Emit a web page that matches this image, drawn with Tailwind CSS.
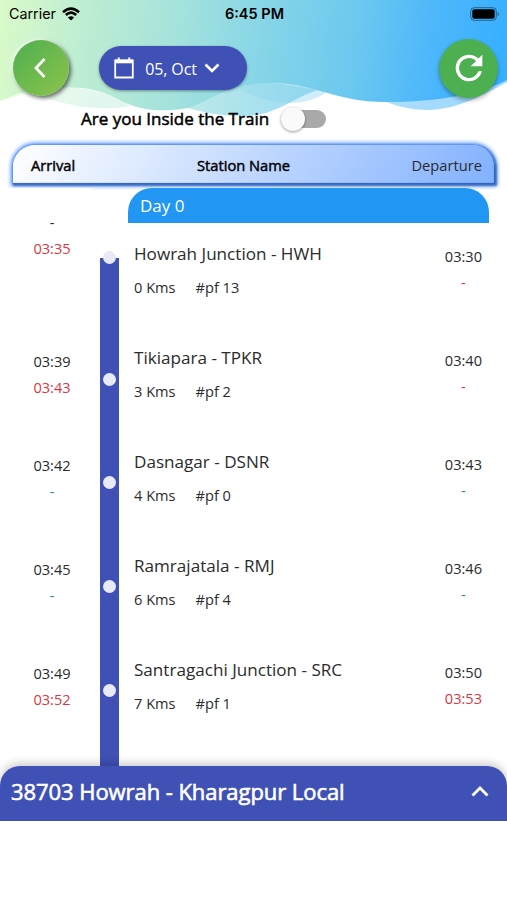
<!DOCTYPE html>
<html lang="en">
<head>
<meta charset="utf-8">
<meta name="viewport" content="width=device-width, initial-scale=1">
<title>Train status</title>
<script src="https://cdn.jsdelivr.net/npm/@tailwindcss/browser@4"></script>
</head>
<body class="bg-white">
<main class="relative flex h-[900px] w-[507px] flex-col overflow-hidden bg-white font-['Open_Sans',sans-serif] text-[#2b2b2b]">
  <svg class="absolute left-0 top-0" width="507" height="135" viewBox="0 0 507 135">
    <defs>
      <linearGradient id="sky" gradientUnits="userSpaceOnUse" x1="-10" y1="30" x2="505" y2="95">
        <stop offset="0" stop-color="#dcfbc8"/><stop offset=".18" stop-color="#bdedd2"/><stop offset=".35" stop-color="#a6e3dc"/><stop offset=".5" stop-color="#8ad7e6"/><stop offset=".7" stop-color="#6cc8ef"/><stop offset=".85" stop-color="#4db7fb"/><stop offset="1" stop-color="#36afff"/>
      </linearGradient>
    </defs>
    <path fill="url(#sky)" fill-opacity=".4" d="M0 101C30 86 75 80 118 98L130 106C85 114 55 99 25 94Z"/>
    <path fill="url(#sky)" fill-opacity=".7" d="M188 108C215 88 245 78 290 85L318 90C290 99 275 116 245 116C222 116 205 113 188 108Z"/>
    <path fill="url(#sky)" fill-opacity=".35" d="M235 85C250 97 270 103 290 103C305 103 318 98 326 93L290 80Z"/>
    <path fill="url(#sky)" fill-opacity=".5" d="M383 101C400 107 412 110 428 110C460 109 485 94 507 82V70Z"/>
    <path fill="url(#sky)" d="M0 0H507V80C480 94 440 102 385 102C335 102 315 83 270 83C230 83 215 98 188 108C165 112 140 112 118 99C90 84 65 87 35 90C20 92 10 97 0 101Z"/>
  </svg>

  <header class="relative flex h-[141px] shrink-0 flex-col">
    <div class="flex h-7 items-center justify-between pl-[9px] pr-[7px] font-['Inter',sans-serif] text-black">
      <div class="flex w-[150px] items-center gap-[6px] text-[14.3px]">Carrier
        <svg width="18" height="14" viewBox="0 0 18 14" fill="none" stroke="#000" stroke-width="2.5"><path d="M1 5.2Q9-2 17 5.2M3.8 8Q9 3.3 14.2 8"/><path d="M9 13.6L5.9 10.5Q9 7.8 12.1 10.5Z" fill="#000" stroke="none"/></svg>
      </div>
      <span class="text-[14.5px] font-semibold">6:45 PM</span>
      <div class="flex w-[150px] justify-end"><svg width="30" height="14" viewBox="0 0 30 14"><rect x=".7" y=".7" width="25.6" height="12.6" rx="3.5" fill="none" stroke="#000" stroke-opacity=".45"/><rect x="2.3" y="2.3" width="22.4" height="9.4" rx="2" fill="#000"/><path d="M27.6 4.7Q30 7 27.6 9.3Z" fill="#000" fill-opacity=".5"/></svg></div>
    </div>
    <div class="flex h-20 items-center pl-[13px] pr-[9px]">
      <button class="grid size-14 place-items-center rounded-full bg-linear-to-br from-[#4caf50] to-[#8bc34a] shadow-[2px_2px_4px_#0009,-1px_-1px_3px_#fff]">
        <svg class="-ml-[3px]" width="14" height="22" viewBox="0 0 14 22" fill="none" stroke="#fff" stroke-width="2.7"><path d="M11.5 2L3 11L11.5 20"/></svg>
      </button>
      <button class="ml-[30px] flex h-11 w-[148px] items-center rounded-full bg-[#3f51b5] pl-[15px] text-white shadow-[0_1px_3px_#0006]">
        <svg width="20" height="22" viewBox="0 0 20 22" fill="none" stroke="#fff" stroke-width="1.8"><path d="M1.2 3.5H18.8V20.5H1.2Z"/><path d="M1 4.5H19" stroke-width="3.6"/><path d="M4.7 .5V4M15.3 .5V4" stroke-width="2"/></svg>
        <span class="ml-[11px] mt-px w-[52px] text-[16px] tracking-[-0.1px] whitespace-nowrap">05, Oct</span>
        <svg class="ml-[7px]" width="16" height="10" viewBox="0 0 16 10" fill="none" stroke="#fff" stroke-width="2.6"><path d="M1.5 1.5L8 8L14.5 1.5"/></svg>
      </button>
      <button class="ml-auto grid size-[59px] place-items-center rounded-full bg-[#4caf50] shadow-[0_2px_4px_#0005]">
        <svg class="-mr-px" width="40" height="40" viewBox="0 0 24 24" fill="#fff"><path d="M17.65 6.35A7.96 7.96 0 0 0 12 4a8 8 0 1 0 7.73 10h-2.08A6 6 0 1 1 12 6c1.66 0 3.14.69 4.22 1.78L13 11h7V4z"/></svg>
      </button>
    </div>
    <div class="flex h-[22px] items-center pl-[81px] text-black">
      <span class="w-[190px] whitespace-nowrap text-[17px] [-webkit-text-stroke:0.5px_#000]">Are you Inside the Train</span>
      <div class="ml-[10px] flex h-[18px] w-[45px] items-center rounded-full bg-[#a9a9a9]"><div class="size-6 shrink-0 rounded-full bg-[#fafafa] shadow-[0_1px_3px_#0006]"></div></div>
    </div>
  </header>

  <div class="mx-[13px] mt-1 flex h-[39px] w-[482px] shrink-0 items-center rounded-t-[22px] bg-linear-[120deg] from-white to-[#82b1ff] pl-[18px] pr-[13px] pt-px text-[14.7px] shadow-[inset_-1px_-1px_1px_#2a5ab8,1px_1px_2px_1px_#1a4a9a99,0_0_4px_2px_#448aff]">
    <span class="w-[166px] text-black [-webkit-text-stroke:0.45px_#000]">Arrival</span>
    <span class="text-black [-webkit-text-stroke:0.45px_#000]">Station Name</span>
    <span class="ml-auto">Departure</span>
  </div>

  <section class="relative mt-1 flex h-[578px] shrink-0 flex-col overflow-hidden text-[14.6px] leading-5">
    <div class="flex h-[139px] shrink-0">
      <div class="flex w-[91px] flex-col items-center gap-[6px] bg-white pl-[13px] pt-[24px]"><span>-</span><span class="text-[#d8393f]">03:35</span></div>
      <div class="ml-[9px] mt-[70px] flex w-[19px] justify-center bg-[#3f51b5]"><i class="-mt-[7px] size-[13px] rounded-full bg-[#e8eaf6]"></i></div>
      <div class="ml-[9px] flex w-[361px] flex-col">
        <div class="flex h-[35px] items-center rounded-t-[24px] bg-[#2196f3] pl-3 pt-px text-[17px] text-white">Day 0</div>
        <div class="flex flex-1 justify-between pl-[6px] pr-[7px] pt-[20px]">
          <div><h2 class="text-[17.1px] leading-[22px]">Howrah Junction - HWH</h2><p class="mt-[12px] flex gap-5"><span>0 Kms</span><span>#pf 13</span></p></div>
          <div class="flex flex-col items-center gap-[6px] pt-[3px]"><span>03:30</span><span class="text-[#d8393f]">-</span></div>
        </div>
      </div>
    </div>
    <div class="flex h-[104px] shrink-0">
      <div class="flex w-[91px] flex-col items-center gap-[6px] pl-[13px] pt-[24px]"><span>03:39</span><span class="text-[#d8393f]">03:43</span></div>
      <div class="ml-[9px] flex w-[19px] items-center justify-center bg-[#3f51b5]"><i class="size-[13px] rounded-full bg-[#e8eaf6]"></i></div>
      <div class="ml-[9px] flex w-[361px] justify-between pl-[6px] pr-[7px] pt-[20px]">
        <div><h2 class="text-[17.1px] leading-[22px]">Tikiapara - TPKR</h2><p class="mt-[12px] flex gap-5"><span>3 Kms</span><span>#pf 2</span></p></div>
        <div class="flex flex-col items-center gap-[6px] pt-[3px]"><span>03:40</span><span class="text-[#d8393f]">-</span></div>
      </div>
    </div>
    <div class="flex h-[104px] shrink-0">
      <div class="flex w-[91px] flex-col items-center gap-[6px] pl-[13px] pt-[24px]"><span>03:42</span><span class="text-[#26985e]">-</span></div>
      <div class="ml-[9px] flex w-[19px] items-center justify-center bg-[#3f51b5] pb-px"><i class="size-[13px] rounded-full bg-[#e8eaf6]"></i></div>
      <div class="ml-[9px] flex w-[361px] justify-between pl-[6px] pr-[7px] pt-[20px]">
        <div><h2 class="text-[17.1px] leading-[22px]">Dasnagar - DSNR</h2><p class="mt-[12px] flex gap-5"><span>4 Kms</span><span>#pf 0</span></p></div>
        <div class="flex flex-col items-center gap-[6px] pt-[3px]"><span>03:43</span><span class="text-[#26985e]">-</span></div>
      </div>
    </div>
    <div class="flex h-[104px] shrink-0">
      <div class="flex w-[91px] flex-col items-center gap-[6px] pl-[13px] pt-[24px]"><span>03:45</span><span class="text-[#26985e]">-</span></div>
      <div class="ml-[9px] flex w-[19px] items-center justify-center bg-[#3f51b5] pb-px"><i class="size-[13px] rounded-full bg-[#e8eaf6]"></i></div>
      <div class="ml-[9px] flex w-[361px] justify-between pl-[6px] pr-[7px] pt-[20px]">
        <div><h2 class="text-[17.1px] leading-[22px]">Ramrajatala - RMJ</h2><p class="mt-[12px] flex gap-5"><span>6 Kms</span><span>#pf 4</span></p></div>
        <div class="flex flex-col items-center gap-[6px] pt-[3px]"><span>03:46</span><span class="text-[#26985e]">-</span></div>
      </div>
    </div>
    <div class="flex h-[104px] shrink-0">
      <div class="flex w-[91px] flex-col items-center gap-[6px] pl-[13px] pt-[24px]"><span>03:49</span><span class="text-[#d8393f]">03:52</span></div>
      <div class="ml-[9px] flex w-[19px] items-center justify-center bg-[#3f51b5] pb-px"><i class="size-[13px] rounded-full bg-[#e8eaf6]"></i></div>
      <div class="ml-[9px] flex w-[361px] justify-between pl-[6px] pr-[7px] pt-[20px]">
        <div><h2 class="text-[17.1px] leading-[22px]">Santragachi Junction - SRC</h2><p class="mt-[12px] flex gap-5"><span>7 Kms</span><span>#pf 1</span></p></div>
        <div class="flex flex-col items-center gap-[6px] pt-[3px]"><span>03:50</span><span class="text-[#d8393f]">03:53</span></div>
      </div>
    </div>
    <div class="ml-[100px] w-[19px] flex-1 bg-[#3f51b5]"></div>
  </section>
  <footer class="relative flex h-[55px] shrink-0 items-center justify-between rounded-t-[20px] bg-[#3f51b5] pb-[5px] pl-[11px] pr-[18px] text-white shadow-[0_-3px_8px_#0003]">
    <span class="text-[22px] tracking-[-0.06px] [-webkit-text-stroke:0.6px_#fff]">38703 Howrah - Kharagpur Local</span>
    <svg width="18" height="12" viewBox="0 0 18 12" fill="none" stroke="#fff" stroke-width="2.8"><path d="M1.5 10.5L9 3L16.5 10.5"/></svg>
  </footer>
  <div class="relative flex-1 bg-white"></div>
</main>
</body>
</html>
